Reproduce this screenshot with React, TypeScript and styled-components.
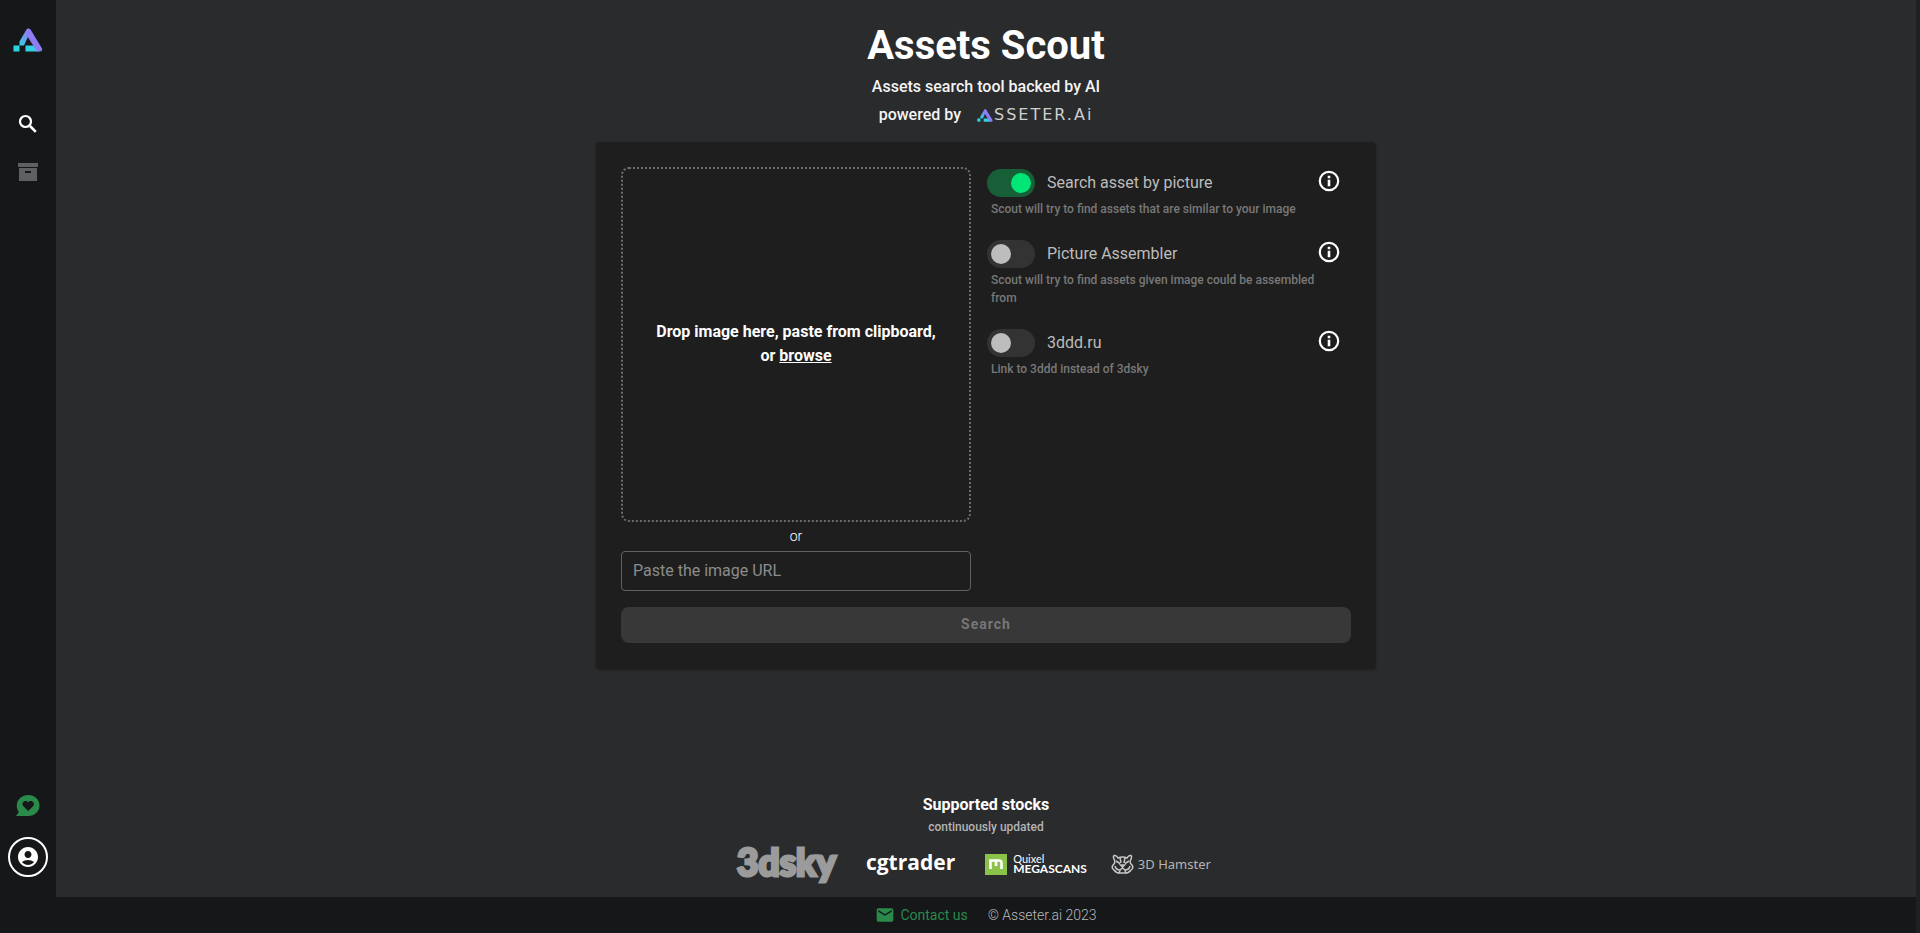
import React, { useId, useState } from "react";
import styled, { createGlobalStyle } from "styled-components";
import { MdAccountCircle, MdEmail } from "react-icons/md";

const GlobalStyle = createGlobalStyle`
  *, *::before, *::after { box-sizing: border-box; }
  body {
    margin: 0;
    background: #151719;
    color: #fff;
    font-family: Roboto, "Liberation Sans", sans-serif;
    font-size: 16px;
    line-height: 24px;
  }
  button, input { font: inherit; color: inherit; }
`;

const Shell = styled.div`
  display: flex;
  min-height: 100vh;
  border-right: 4px solid #1f2022;
`;

const Sidebar = styled.nav`
  flex: none;
  width: 56px;
  padding: 24px 0 56px;
  display: flex;
  flex-direction: column;
  align-items: center;
`;

const NavLink = styled.a<{ $muted?: boolean }>`
  display: grid;
  place-items: center;
  width: 40px;
  height: 48px;
  color: ${(p) => (p.$muted ? "#5f6061" : "#fff")};
`;

const HomeLink = styled.a`
  display: block;
  height: 32px;
  margin-bottom: 44px;
`;

const SidebarEnd = styled.div`
  margin-top: auto;
  display: flex;
  flex-direction: column;
  align-items: center;
  gap: 19px;
`;

const RoundButton = styled.button<{ $ring?: boolean }>`
  display: grid;
  place-items: center;
  width: 40px;
  height: ${(p) => (p.$ring ? 40 : 24)}px;
  padding: 0;
  background: none;
  border: ${(p) => (p.$ring ? "2px solid #fff" : "0")};
  border-radius: 50%;
  cursor: pointer;
`;

const Column = styled.div`
  flex: 1;
  min-width: 0;
  display: flex;
  flex-direction: column;
`;

const Main = styled.main`
  flex: 1;
  display: flex;
  flex-direction: column;
  align-items: center;
  padding: 19px 16px 6px;
  background: #2a2b2d;
`;

const Title = styled.h1`
  margin: 0;
  font-size: 40px;
  line-height: 54px;
  font-weight: 700;
`;

const Tagline = styled.p`
  margin: 0;
  line-height: 28px;
  font-weight: 500;
  color: #f4f4f4;
  display: flex;
  align-items: center;
  gap: 16px;
`;

const Wordmark = styled.span`
  display: flex;
  align-items: center;
  gap: 1px;
  font-family: "DejaVu Sans", sans-serif;
  font-size: 16px;
  font-weight: 400;
  letter-spacing: 2px;
  color: #cfcfcf;
`;

const Card = styled.form`
  width: 100%;
  max-width: 780px;
  margin: 13px 0 32px;
  padding: 25px 25px 26px;
  border-radius: 4px;
  background: #1e1e1e;
  box-shadow: 0 1px 3px rgba(0, 0, 0, 0.3);
`;

const CardColumns = styled.div`
  display: flex;
  gap: 16px;
`;

const Source = styled.div`
  flex: none;
  width: 350px;
`;

const DropZone = styled.div`
  display: flex;
  flex-direction: column;
  align-items: center;
  justify-content: center;
  height: 355px;
  padding: 0 24px 2px;
  border: 2px dotted #6c6c6c;
  border-radius: 8px;
  text-align: center;
  font-weight: 700;
`;

const DropLine = styled.div`
  display: flex;
  gap: 4px;
`;

const BrowseButton = styled.button`
  padding: 0;
  border: 0;
  background: none;
  font-weight: 700;
  text-decoration: underline;
  cursor: pointer;
`;

const OrText = styled.div`
  padding: 4px 0;
  text-align: center;
  font-size: 14px;
  line-height: 21px;
  font-weight: 300;
`;

const UrlInput = styled.input`
  display: block;
  width: 100%;
  height: 40px;
  padding: 0 11px 2px;
  border: 1px solid #626262;
  border-radius: 4px;
  background: none;
  outline: none;
  &::placeholder { color: #8c8c8c; opacity: 1; }
`;

const Options = styled.div`
  flex: 1;
  min-width: 0;
  padding: 2px 10px 0 0;
`;

const Option = styled.div`
  margin-bottom: 22px;
`;

const OptionRow = styled.div`
  display: flex;
  align-items: center;
  height: 28px;
`;

const Switch = styled.input`
  appearance: none;
  flex: none;
  width: 48px;
  height: 28px;
  margin: 0 12px 0 0;
  padding: 4px;
  border-radius: 14px;
  background: #333;
  cursor: pointer;
  &::before {
    content: "";
    display: block;
    width: 20px;
    height: 20px;
    border-radius: 50%;
    background: #bdbdbd;
  }
  &:checked { background: #175f37; }
  &:checked::before { margin-left: 20px; background: #00e676; }
`;

const OptionLabel = styled.label`
  flex: 1;
  color: #bcbcbc;
  cursor: pointer;
`;

const InfoButton = styled.button`
  display: flex;
  padding: 0 0 4px;
  border: 0;
  background: none;
  cursor: pointer;
`;

const Hint = styled.p`
  margin: 3px 0 0;
  padding-left: 4px;
  font-size: 12px;
  line-height: 18px;
  font-weight: 500;
  color: #787878;
`;

const SearchButton = styled.button`
  display: block;
  width: 100%;
  height: 36px;
  margin-top: 16px;
  padding: 0 0 2px;
  border: 0;
  border-radius: 8px;
  background: #383838;
  color: #767676;
  font-size: 14px;
  font-weight: 700;
  letter-spacing: 1px;
`;

const Stocks = styled.section`
  margin-top: auto;
  display: flex;
  flex-direction: column;
  align-items: center;
`;

const StocksTitle = styled.h2`
  margin: 0;
  font-size: 16px;
  line-height: 24px;
  font-weight: 700;
`;

const StocksNote = styled.p`
  margin: 0;
  font-size: 12px;
  line-height: 20px;
  font-weight: 500;
  color: #b4b4b4;
`;

const StockList = styled.div`
  display: flex;
  align-items: center;
  gap: 24px;
  height: 54px;
  padding-right: 24px;
`;

const StockLink = styled.a<{ $font?: string; $size?: number; $weight?: number; $color?: string }>`
  display: flex;
  align-items: center;
  gap: 4px;
  text-decoration: none;
  color: ${(p) => p.$color ?? "#fff"};
  font-family: ${(p) => p.$font ?? "Lato"}, sans-serif;
  font-size: ${(p) => p.$size ?? 12}px;
  font-weight: ${(p) => p.$weight ?? 400};
`;

const StockWordmark = styled(StockLink)`
  padding: 0 6px 4px 0;
`;

const HeavyName = styled.span`
  -webkit-text-stroke: 3px currentColor;
`;

const QuixelName = styled.span`
  display: flex;
  flex-direction: column;
  margin-left: 2px;
  font-size: 11px;
  line-height: 10px;
  b { font-size: 12px; font-weight: 700; }
`;

const Footer = styled.footer`
  display: flex;
  justify-content: center;
  align-items: center;
  gap: 20px;
  height: 36px;
  font-size: 14px;
  font-weight: 300;
  color: #b9b9b9;
`;

const ContactLink = styled.a`
  display: flex;
  align-items: center;
  gap: 5px;
  font-weight: 400;
  color: #2a8a4a;
  text-decoration: none;
`;

function BrandMark({ width, height }: { width: number; height: number }) {
  const id = useId();
  return (
    <svg width={width} height={height} viewBox="0 0 30 24" aria-hidden="true">
      <defs>
        <linearGradient id={id} x1="0" y1="1" x2="0.7" y2="0">
          <stop offset="0" stopColor="#2cd5e4" />
          <stop offset="0.45" stopColor="#5fa6ee" />
          <stop offset="1" stopColor="#9a6cf5" />
        </linearGradient>
      </defs>
      <path d="M0.5 17.5h6v6h-6z" fill="#2ad4e2" />
      <path d="M12.5 17.5h10l3 6h-13z" fill="#34cfe0" />
      <path d="M6.5 17.5v-4L13 2.2Q15.5-1.4 18 2.2L11 17.5z" fill={`url(#${id})`} />
      <path d="M13 2.2Q15.5-1.4 18 2.2L29 20.5Q30 23.5 26.5 23.5H24L13.5 7z" fill="#8d7df5" />
    </svg>
  );
}

const SearchIcon = () => (
  <svg width="24" height="24" viewBox="0 0 24 24" fill="none" stroke="#fff" aria-hidden="true">
    <circle cx="9.500" cy="9.500" r="5.500" strokeWidth="2.200" />
    <path d="M14 14l5.800 5.800" strokeWidth="2.600" />
  </svg>
);

const InfoIcon = () => (
  <svg width="24" height="24" viewBox="0 0 24 24" aria-hidden="true">
    <circle cx="12" cy="12" r="9.200" fill="none" stroke="#fff" strokeWidth="2.200" />
    <path d="M10.700 6.800h2.600v2.400h-2.600zM10.700 10.800h2.600v6.400h-2.600z" fill="#fff" />
  </svg>
);

const ArchiveIcon = () => (
  <svg width="20" height="18" viewBox="0 0 20 18" fill="currentColor" aria-hidden="true">
    <path d="M0 0h20v4H0z" />
    <path fillRule="evenodd" d="M1 5h18v13H1zM7.500 8Q7 8 7 8.500V10h6V8.500Q13 8 12.500 8z" />
  </svg>
);

const FeedbackIcon = () => (
  <svg width="24" height="22" viewBox="0 0 24 22" fill="#2a8a4a" aria-hidden="true">
    <path
      fillRule="evenodd"
      d="M12.500 0C18.500 0 23.500 4.500 23.500 10.500S18.500 21 12.500 21H.7c-.5 0-.5-.6-.2-.9 1.200-1 1.900-2.100 2.200-3.500C1.200 14.900.8 12.800.8 10.500.8 4.500 6 0 12.500 0zM12.200 16l4.600-4.500C18.500 9.800 18.200 7.400 16.500 6.500c-1.500-.8-3.300-.4-4.300 1-1-1.400-2.800-1.800-4.300-1-1.700.9-2 3.300-.3 5z"
    />
  </svg>
);

const MegascansIcon = () => (
  <svg width="22" height="21" viewBox="0 0 22 21" aria-hidden="true">
    <path d="M0 0h22v21H0z" fill="#8bc34a" />
    <path d="M4 6.500H14Q16.500 6.500 16.500 9V15M5.500 6v9M11 6.500V12" fill="none" stroke="#fff" strokeWidth="2.600" />
  </svg>
);

const HamsterIcon = () => (
  <svg width="23" height="20" viewBox="0 0 23 20" fill="none" stroke="#c8c8c8" strokeWidth="1.500" aria-hidden="true">
    <path d="M4 7Q1.500 3 3 1.500 5.500 1 7 4 11.500 2 16 4 17.500 1 20 1.500 21.500 3 19 7" />
    <path d="M3.500 7Q4.500 9 2 11 0 14 3 16 5 19 9 19h5q4 0 6-3 3-2 1-5-2.500-2-1.500-4" />
    <path d="M9 3.500L10 9M14 3.500L13 9M5 7l4 2.500M18 7l-4 2.500M9.500 11h4l-2 2zM4 12q1 4 5 4l2.500-2L14 16q4 0 5-4M8 19l1-2.500M15 19l-1-2.500" />
  </svg>
);

interface OptionProps {
  label: string;
  hint: string;
  initial?: boolean;
}

function SwitchOption({ label, hint, initial = false }: OptionProps) {
  const id = useId();
  const [on, setOn] = useState(initial);
  return (
    <Option>
      <OptionRow>
        <Switch id={id} type="checkbox" role="switch" checked={on} onChange={(e) => setOn(e.target.checked)} />
        <OptionLabel htmlFor={id}>{label}</OptionLabel>
        <InfoButton type="button" aria-label={`About ${label}`}>
          <InfoIcon />
        </InfoButton>
      </OptionRow>
      <Hint>{hint}</Hint>
    </Option>
  );
}

export default function App() {
  const [url, setUrl] = useState("");
  return (
    <>
      <GlobalStyle />
      <Shell>
        <Sidebar>
          <HomeLink href="#" aria-label="Home">
            <BrandMark width={30} height={32} />
          </HomeLink>
          <NavLink href="#search" aria-label="Search assets">
            <SearchIcon />
          </NavLink>
          <NavLink href="#archive" aria-label="Archive" $muted>
            <ArchiveIcon />
          </NavLink>
          <SidebarEnd>
            <RoundButton type="button" aria-label="Feedback">
              <FeedbackIcon />
            </RoundButton>
            <RoundButton type="button" aria-label="Account" $ring>
              <MdAccountCircle size={24} />
            </RoundButton>
          </SidebarEnd>
        </Sidebar>
        <Column>
          <Main>
            <Title>Assets Scout</Title>
            <Tagline>Assets search tool backed by AI</Tagline>
            <Tagline>
              powered by
              <Wordmark>
                <BrandMark width={16} height={13} />
                SSETER.Ai
              </Wordmark>
            </Tagline>
            <Card onSubmit={(e: React.FormEvent) => e.preventDefault()}>
              <CardColumns>
                <Source>
                  <DropZone>
                    <div>Drop image here, paste from clipboard,</div>
                    <DropLine>
                      <span>or</span>
                      <BrowseButton type="button">browse</BrowseButton>
                    </DropLine>
                  </DropZone>
                  <OrText>or</OrText>
                  <UrlInput
                    type="url"
                    aria-label="Image URL"
                    placeholder="Paste the image URL"
                    value={url}
                    onChange={(e) => setUrl(e.target.value)}
                  />
                </Source>
                <Options>
                  <SwitchOption
                    label="Search asset by picture"
                    hint="Scout will try to find assets that are similar to your image"
                    initial
                  />
                  <SwitchOption
                    label="Picture Assembler"
                    hint="Scout will try to find assets given image could be assembled from"
                  />
                  <SwitchOption label="3ddd.ru" hint="Link to 3ddd instead of 3dsky" />
                </Options>
              </CardColumns>
              <SearchButton type="submit" disabled={!url}>
                Search
              </SearchButton>
            </Card>
            <Stocks>
              <StocksTitle>Supported stocks</StocksTitle>
              <StocksNote>continuously updated</StocksNote>
              <StockList>
                <StockWordmark href="#3dsky" $size={37} $weight={900} $color="#9b9b9b">
                  <HeavyName>3dsky</HeavyName>
                </StockWordmark>
                <StockWordmark href="#cgtrader" $font="Open Sans" $size={21} $weight={700}>
                  cgtrader
                </StockWordmark>
                <StockLink href="#megascans">
                  <MegascansIcon />
                  <QuixelName>
                    <span>Quixel</span>
                    <b>MEGASCANS</b>
                  </QuixelName>
                </StockLink>
                <StockLink href="#3dhamster" $font="Noto Sans" $size={13} $color="#b4b4b4">
                  <HamsterIcon />
                  3D Hamster
                </StockLink>
              </StockList>
            </Stocks>
          </Main>
          <Footer>
            <ContactLink href="#contact">
              <MdEmail size={20} />
              Contact us
            </ContactLink>
            <span>© Asseter.ai 2023</span>
          </Footer>
        </Column>
      </Shell>
    </>
  );
}
